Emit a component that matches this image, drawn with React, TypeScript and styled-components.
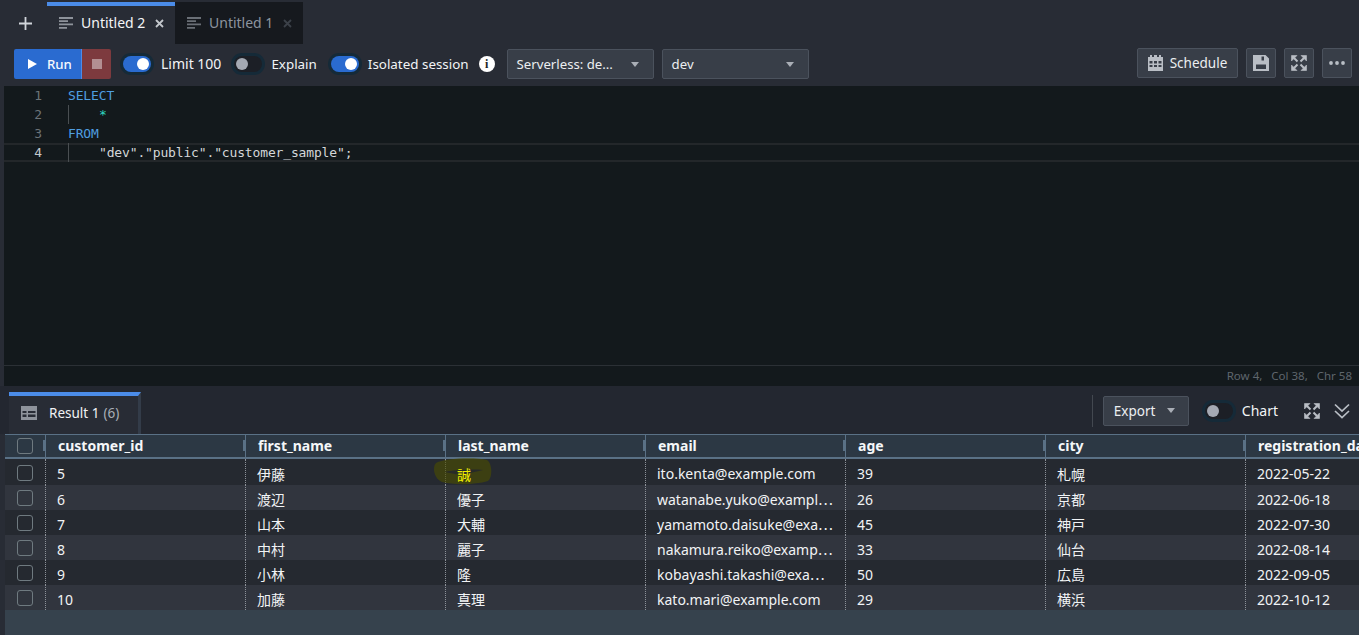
import React from "react";
import styled, { createGlobalStyle } from "styled-components";

const Global = createGlobalStyle`
  html, body { margin: 0; padding: 0; height: 100%; background: #232730; overflow: hidden; }
  #root { height: 100%; }
  * { box-sizing: border-box; }
`;
const Page = styled.div`
  width: 1359px; height: 635px; overflow: hidden; background: #282c35; display: flex; flex-direction: column;
  font-family: "Noto Sans", "Noto Sans CJK JP", sans-serif; color: #fbfbfb; font-size: 14px;
`;
const TabBar = styled.div`
  height: 44px; padding-top: 2px; display: flex; align-items: stretch; flex: none;
`;
const AddSlot = styled.div`
  width: 47px; display: flex; align-items: center; justify-content: center; color: #d1d5db; padding-left: 3px;
`;
const Tab = styled.div<{ $active?: boolean }>`
  width: 128px; display: flex; align-items: center; padding-left: 12px; gap: 8px;
  background: ${p => (p.$active ? "transparent" : "#16191e")};
  border-top: 4px solid ${p => (p.$active ? "#4b8ce8" : "#16191e")};
  color: ${p => (p.$active ? "#f4f5f7" : "#8d949e")};
  padding-bottom: 4px;
`;
const TabLabel = styled.span`flex: none; width: 65px; white-space: nowrap; line-height: 18px;`;
const TabClose = styled.span<{ $dim?: boolean }>`
  color: ${p => (p.$dim ? "#3c4149" : "#c3c7cc")}; display: flex; margin-left: 1px;
`;
const Toolbar = styled.div`
  height: 42px; flex: none; display: flex; align-items: center; padding: 0 7px 0 14px; padding-bottom: 2px;
`;
const RunGroup = styled.div`display: flex; height: 30px; margin-right: 11px;`;
const RunBtn = styled.div`
  width: 68px; background: #2a6bd0; border-radius: 2px 0 0 2px; display: flex; align-items: center;
  padding-left: 14px; gap: 10px; font-weight: 500; font-size: 13.2px; color: #f5f8fd; border-right: 1px solid #4b8ce8;
`;
const StopBtn = styled.div`
  width: 29px; background: #7d3a3e; border-radius: 0 2px 2px 0; display: flex; align-items: center; justify-content: center;
`;
const StopSq = styled.span`width: 10px; height: 10px; background: #b38f92;`;
const ToggleWrap = styled.div<{ $w?: number; $size?: number; $gap?: number }>`
  display: flex; align-items: center; gap: ${p => p.$gap ?? 9}px; white-space: nowrap; margin-right: ${p => p.$w ?? 0}px; color: #f2f4f6;
  font-size: ${p => p.$size ?? 14}px; padding-bottom: 1px;
`;
const Track = styled.span<{ $on?: boolean }>`
  width: 28px; height: 16px; border-radius: 8px; flex: none; display: flex; align-items: center; padding: 0 2px;
  margin: 1px 0 0 1px;
  justify-content: ${p => (p.$on ? "flex-end" : "flex-start")};
  background: ${p => (p.$on ? "#2a6bd0" : "#1c1f26")};
  box-shadow: 0 0 0 3px #152a38;
`;
const Knob = styled.span<{ $on?: boolean }>`
  width: 12px; height: 12px; border-radius: 50%; background: ${p => (p.$on ? "#fff" : "#a4a9b3")};
`;
const Info = styled.span`
  width: 16px; height: 16px; border-radius: 50%; background: #fff; color: #1c1f26; display: flex; align-items: center; justify-content: center;
  font: 700 12px "Liberation Serif", serif; margin: 0 12px 0 0;
`;
const Select = styled.div<{ $w: number }>`
  width: ${p => p.$w}px; height: 30px; background: #383e48; border: 1px solid #4b525d; border-radius: 2px; display: flex; align-items: center;
  justify-content: space-between; padding: 0 14px 0 9px; margin-right: 8px; white-space: nowrap; color: #eceef1; font-size: 13.2px;
`;
const Caret = styled.span`
  width: 0; height: 0; border-left: 4.5px solid transparent; border-right: 4.5px solid transparent; border-top: 5px solid #a9aeb6;
`;
const Spacer = styled.div`flex: 1;`;
const ToolBtn = styled.div<{ $w: number }>`
  width: ${p => p.$w}px; height: 30px; margin-left: 8px; margin-top: -2px; background: #383e48; border: 1px solid #4b525d; border-radius: 2px;
  display: flex; align-items: center; justify-content: center; gap: 7px; color: #eceef1; flex: none; font-size: 13.5px;
`;
const EditorOuter = styled.div`
  height: 300px; margin-left: 4px; background: #13191c; flex: none; display: flex; flex-direction: column;
`;
const Code = styled.div`
  height: 280px; flex: none; border-bottom: 1px solid #2b3035; font: 13px/19px "DejaVu Sans Mono", monospace; letter-spacing: -0.15px;
`;
const Line = styled.div<{ $cur?: boolean }>`
  height: 19px; display: flex; white-space: pre;
  ${p => (p.$cur ? "box-shadow: inset 0 2px 0 #23272a, inset 0 -2px 0 #23272a;" : "")}
`;
const Gutter = styled.span<{ $cur?: boolean }>`
  width: 38px; text-align: right; flex: none; color: ${p => (p.$cur ? "#c3c8cc" : "#6c7378")};
`;
const CodeText = styled.span<{ $c?: string; $guide?: boolean }>`
  margin-left: 26px; color: ${p => p.$c ?? "#d4d7d9"};
  ${p => (p.$guide ? "border-left: 1px solid #4a4f52; padding-left: 30px;" : "")}
`;
const Status = styled.div`
  flex: 1; display: flex; align-items: center; justify-content: flex-end; gap: 9px; padding: 0 7px 1px 0; font-size: 11.5px; color: #5f666d;
  background: #13191c;
`;
const ResultBar = styled.div`
  height: 48px; flex: none; background: #232730; display: flex; padding: 6px 0 0 9px; align-items: stretch;
`;
const ResultTab = styled.div`
  width: 132px; height: 42px; background: #282c35; border-top: 4px solid #4b8ce8; border-right: 3px solid #333c49;
  display: flex; align-items: center; padding-left: 12px; gap: 12px; white-space: nowrap; color: #f0f2f4; padding-bottom: 4px;
  font-size: 13.5px;
`;
const Count = styled.span`color: #a9aeb6; margin-left: 4px;`;
const ResActions = styled.div`
  flex: 1; display: flex; align-items: center; justify-content: flex-end; padding-right: 9px; padding-bottom: 5px;
`;
const Sep = styled.span`width: 1px; height: 32px; background: #434850; margin-right: 10px;`;
const ExportBtn = styled.div`
  width: 86px; height: 30px; background: #383e48; border: 1px solid #4b525d; border-radius: 2px; display: flex; align-items: center;
  justify-content: space-between; padding: 0 13px 0 10px; margin-right: 15px; font-size: 13.5px; color: #eceef1;
`;
const IconSlot = styled.span<{ $ml: number }>`display: flex; margin-left: ${p => p.$ml}px; color: #b9bec5;`;
const Table = styled.div`
  margin-left: 5px; flex: 1; background: #36424d; display: flex; flex-direction: column; font-size: 14px; position: relative;
`;
const HeadRow = styled.div`
  height: 25px; flex: none; display: flex; background: #2c3844; border-top: 1px solid #5a7186; border-bottom: 2px solid #5a7186;
`;
const HeadCell = styled.div<{ $cb?: boolean }>`
  flex: none; width: ${p => (p.$cb ? "41px" : "200px")}; position: relative; display: flex; align-items: center;
  ${p => (p.$cb ? "justify-content: center; padding-right: 1px;" : "padding: 0 0 2px 12px;")}
  font-weight: 700; white-space: nowrap; overflow: hidden; color: #f5f7f9;
  border-right: 1px solid #5a7186;
  &::after { content: ""; position: absolute; right: 0; top: 5px; height: 11px; width: 2px; background: #5a7186; }
`;
const DataRow = styled.div<{ $alt?: boolean; $first?: boolean }>`
  height: ${p => (p.$first ? 26 : 25)}px; flex: none; display: flex; background: ${p => (p.$alt ? "#31353e" : "#252930")};
`;
const Cell = styled.div<{ $cb?: boolean }>`
  flex: none; width: ${p => (p.$cb ? "41px" : "200px")}; display: flex; align-items: center; white-space: nowrap;
  ${p => (p.$cb ? "justify-content: center; padding: 1px 1px 0 0;" : "padding-left: 11px; padding-top: 3px;")}
  border-right: 1px dotted #8d9299; color: #f1f3f5; overflow: hidden;
`;
const Box = styled.span`
  width: 16px; height: 16px; border: 1.5px solid #6f7a80; border-radius: 3px; display: block;
`;
const Mark = styled.svg`position: absolute; left: 428px; top: 24px; pointer-events: none;`;
const Hit = styled.span`color: #f0f000; position: relative; z-index: 1;`;

const cols = ["customer_id", "first_name", "last_name", "email", "age", "city", "registration_date"];
const rows = [
  ["5", "伊藤", "誠", "ito.kenta@example.com", "39", "札幌", "2022-05-22"],
  ["6", "渡辺", "優子", "watanabe.yuko@exampl⋯", "26", "京都", "2022-06-18"],
  ["7", "山本", "大輔", "yamamoto.daisuke@exa⋯", "45", "神戸", "2022-07-30"],
  ["8", "中村", "麗子", "nakamura.reiko@examp⋯", "33", "仙台", "2022-08-14"],
  ["9", "小林", "隆", "kobayashi.takashi@exa⋯", "50", "広島", "2022-09-05"],
  ["10", "加藤", "真理", "kato.mari@example.com", "29", "横浜", "2022-10-12"],
];

const DocIcon = ({ c }: { c: string }) => (
  <svg width="14" height="14" viewBox="0 0 14 14" fill="none" stroke={c} strokeWidth="1.8">
    <path d="M0 2h14M0 5.200h9M0 8.400h14M0 11.800h8" />
  </svg>
);
const X = () => (
  <svg width="9" height="9" viewBox="0 0 9 9" fill="none" stroke="currentColor" strokeWidth="1.8"><path d="M1 1l7 7M8 1L1 8" /></svg>
);
const Expand = ({ c = "currentColor" }: { c?: string }) => (
  <svg width="16" height="16" viewBox="0 0 16 16" fill={c} stroke={c}>
    <path fill="none" strokeWidth="2" d="M3 3l3.500 3.500M13 3L9.500 6.500M3 13l3.500-3.500M13 13l-3.500-3.500" />
    <path strokeWidth="0.6" d="M.5.5h5.500L.5 6zM15.500.5v5.500L10 .5zM.5 15.500V10l5.500 5.500zM15.500 15.500H10l5.500-5.500z" />
  </svg>
);

export default function App() {
  return (
    <Page>
      <Global />
      <TabBar>
        <AddSlot>
          <svg width="13" height="13" viewBox="0 0 13 13" stroke="currentColor" strokeWidth="1.8"><path d="M6.500 0v13M0 6.500h13" /></svg>
        </AddSlot>
        <Tab $active><DocIcon c="#8e939b" /><TabLabel>Untitled 2</TabLabel><TabClose><X /></TabClose></Tab>
        <Tab><DocIcon c="#6a6f76" /><TabLabel>Untitled 1</TabLabel><TabClose $dim><X /></TabClose></Tab>
      </TabBar>
      <Toolbar>
        <RunGroup>
          <RunBtn>
            <svg width="9" height="10" viewBox="0 0 9 10" fill="#fff"><path d="M0 0l9 5-9 5z" /></svg>
            Run
          </RunBtn>
          <StopBtn><StopSq /></StopBtn>
        </RunGroup>
        <ToggleWrap $w={12} $gap={10}><Track $on><Knob $on /></Track>Limit 100</ToggleWrap>
        <ToggleWrap $w={13} $size={13.4}><Track><Knob /></Track>Explain</ToggleWrap>
        <ToggleWrap $w={10} $size={13.4}><Track $on><Knob $on /></Track>Isolated session</ToggleWrap>
        <Info>i</Info>
        <Select $w={147}>Serverless: de...<Caret /></Select>
        <Select $w={147}>dev<Caret /></Select>
        <Spacer />
        <ToolBtn $w={101}>
          <svg width="15" height="16" viewBox="0 0 15 16" fill="#b9bec5" fillRule="evenodd">
            <path d="M2 0h2v2h2V0h3v2h2V0h2v2h2v14H0V2h2zM1.500 6v2.500h3V6zM6 6v2.500h3V6zM10.500 6v2.500h3V6zM1.500 10v2h3v-2zM6 10v2h3v-2zM10.500 10v2h3v-2z" />
          </svg>
          Schedule
        </ToolBtn>
        <ToolBtn $w={30}>
          <svg width="16" height="16" viewBox="0 0 16 16" fill="#b9bec5" fillRule="evenodd">
            <path d="M0 0h12.500L16 3.500V16H0zM3 9.500v4.500h10V9.500zM8.500 1.500v4h2.500v-4z" />
          </svg>
        </ToolBtn>
        <ToolBtn $w={30}><Expand c="#b9bec5" /></ToolBtn>
        <ToolBtn $w={30}>
          <svg width="16" height="4" viewBox="0 0 16 4" fill="#b9bec5"><circle cx="2" cy="2" r="1.900" /><circle cx="8" cy="2" r="1.900" /><circle cx="14" cy="2" r="1.900" /></svg>
        </ToolBtn>
      </Toolbar>
      <EditorOuter>
        <Code>
          <Line><Gutter>1</Gutter><CodeText $c="#4f9ee0">SELECT</CodeText></Line>
          <Line><Gutter>2</Gutter><CodeText $c="#2fd9c0" $guide>*</CodeText></Line>
          <Line><Gutter>3</Gutter><CodeText $c="#4f9ee0">FROM</CodeText></Line>
          <Line $cur><Gutter $cur>4</Gutter><CodeText $guide>"dev"."public"."customer_sample";</CodeText></Line>
        </Code>
        <Status><span>Row 4,</span><span>Col 38,</span><span>Chr 58</span></Status>
      </EditorOuter>
      <ResultBar>
        <ResultTab>
          <svg width="16" height="14" viewBox="0 0 16 14" fill="#8e939b" fillRule="evenodd">
            <path d="M0 0h16v14H0zM1.500 5v2h4V5zM7 5v2h7.500V5zM1.500 8.500v2.500h4V8.500zM7 8.500v2.500h7.500V8.500z" />
          </svg>
          <span>Result 1<Count>(6)</Count></span>
        </ResultTab>
        <ResActions>
          <Sep />
          <ExportBtn>Export<Caret /></ExportBtn>
          <ToggleWrap><Track><Knob /></Track>Chart</ToggleWrap>
          <IconSlot $ml={26}><Expand /></IconSlot>
          <IconSlot $ml={14}>
            <svg width="16" height="16" viewBox="0 0 16 16" fill="none" stroke="currentColor" strokeWidth="1.700"><path d="M1 1.500l7 6.500 7-6.500M1 8l7 6.500L15 8" /></svg>
          </IconSlot>
        </ResActions>
      </ResultBar>
      <Table>
        <HeadRow>
          <HeadCell $cb><Box /></HeadCell>
          {cols.map(c => <HeadCell key={c}>{c}</HeadCell>)}
        </HeadRow>
        {rows.map((r, i) => (
          <DataRow key={r[0]} $alt={i % 2 === 1} $first={i === 0}>
            <Cell $cb><Box /></Cell>
            {r.map((v, j) => (
              <Cell key={j}>{i === 0 && j === 2 ? <Hit>{v}</Hit> : v}</Cell>
            ))}
          </DataRow>
        ))}
        <Mark width="60" height="27" viewBox="0 0 60 27">
          <path d="M3 5C12 0 42-1 54 2c5 3 6 17 1 21-13 4-34 4-46 1C1 21-1 9 3 5z" fill="#4a4d00" fillOpacity="0.62" />
          <path d="M12 14c10-2 26-3 38-2-10 2-18 5-28 4z" fill="#23272e" fillOpacity="0.85" />
        </Mark>
      </Table>
    </Page>
  );
}
